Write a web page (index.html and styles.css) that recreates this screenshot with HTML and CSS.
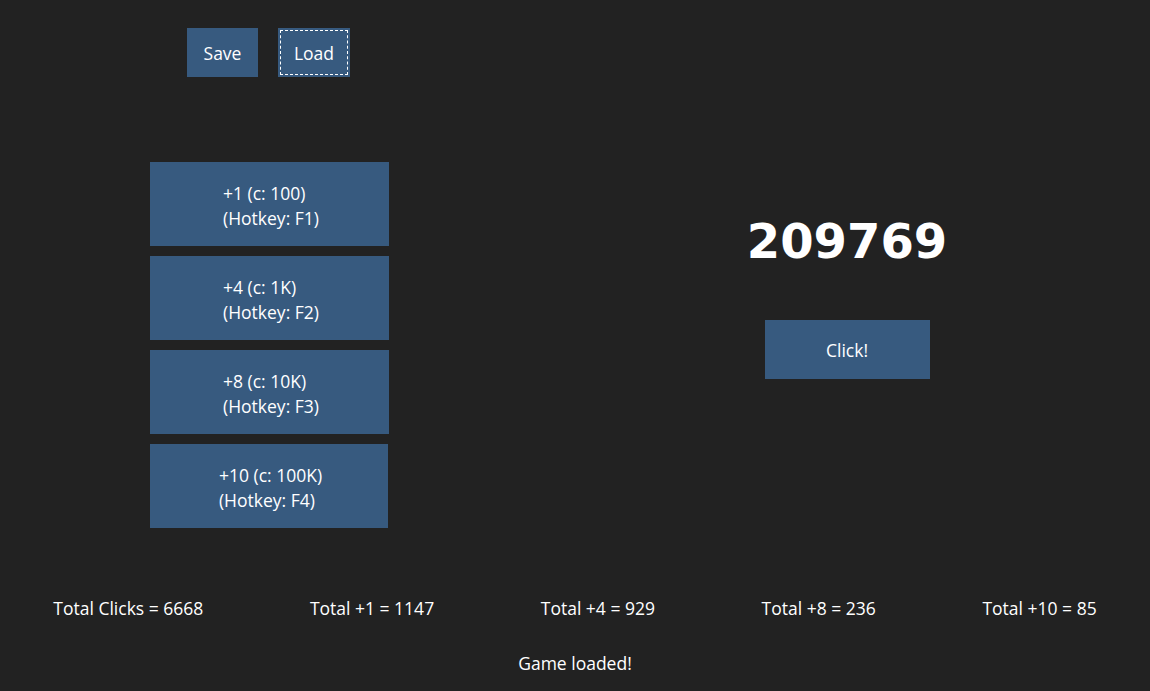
FILE: index.html
```html
<!DOCTYPE html>
<html lang="en">
<head>
<meta charset="utf-8">
<title>Clicker</title>
<link rel="stylesheet" href="styles.css">
</head>
<body>
<div class="page">
  <div class="main">
    <div class="left">
      <div class="toolbar">
        <button class="btn btn-save">Save</button>
        <button class="btn btn-load">Load</button>
      </div>
      <div class="upgrades">
        <button class="btn upgrade"><span class="lbl">+1 (c: 100)<br>(Hotkey: F1)</span></button>
        <button class="btn upgrade"><span class="lbl">+4 (c: 1K)<br>(Hotkey: F2)</span></button>
        <button class="btn upgrade"><span class="lbl">+8 (c: 10K)<br>(Hotkey: F3)</span></button>
        <button class="btn upgrade upgrade-last"><span class="lbl">+10 (c: 100K)<br>(Hotkey: F4)</span></button>
      </div>
    </div>
    <div class="right">
      <div class="score">209769</div>
      <button class="btn click">Click!</button>
    </div>
  </div>
  <div class="stats">
    <span>Total Clicks = 6668</span>
    <span>Total +1 = 1147</span>
    <span>Total +4 = 929</span>
    <span>Total +8 = 236</span>
    <span>Total +10 = 85</span>
  </div>
  <div class="message">Game loaded!</div>
</div>
</body>
</html>
```
FILE: styles.css
```css
html, body {
  margin: 0;
  padding: 0;
  background: #222222;
}
body {
  font-family: "Open Sans", "Noto Sans", sans-serif;
  font-size: 17.5px;
  color: #ffffff;
  width: 1150px;
  height: 691px;
  overflow: hidden;
}
.page {
  display: flex;
  flex-direction: column;
}
.main {
  display: flex;
}
.left {
  width: 537px;
  display: flex;
  flex-direction: column;
  align-items: center;
}
.toolbar {
  margin-top: 28px;
  display: flex;
  gap: 20px;
}
.btn {
  font-family: inherit;
  font-size: 17.5px;
  color: #ffffff;
  background: #375a7f;
  border: none;
  padding: 0;
  margin: 0;
  cursor: pointer;
}
.btn-save {
  width: 71px;
  height: 49px;
}
.btn-load {
  width: 72px;
  height: 49px;
  outline: 1px dashed #ffffff;
  outline-offset: -3px;
}
.upgrades {
  margin-top: 85px;
  margin-left: 2px;
  display: flex;
  flex-direction: column;
  gap: 10px;
  align-items: flex-start;
}
.upgrade {
  width: 239px;
  height: 84px;
  line-height: 25px;
  text-align: center;
  padding-top: 3px;
  padding-left: 3px;
}
.upgrade-last {
  width: 238px;
}
.lbl {
  display: inline-block;
  text-align: left;
}
.right {
  flex: 1;
  display: flex;
  flex-direction: column;
  align-items: center;
  padding-left: 7px;
}
.score {
  margin-top: 213px;
  font-family: "DejaVu Sans", sans-serif;
  font-weight: bold;
  font-size: 48px;
  line-height: 56px;
  color: #ffffff;
}
.click {
  margin-top: 51px;
  width: 165px;
  height: 59px;
}
.stats {
  margin-top: 69px;
  display: flex;
  justify-content: space-around;
  line-height: 22px;
}
.message {
  margin-top: 33px;
  text-align: center;
  line-height: 22px;
}
```
